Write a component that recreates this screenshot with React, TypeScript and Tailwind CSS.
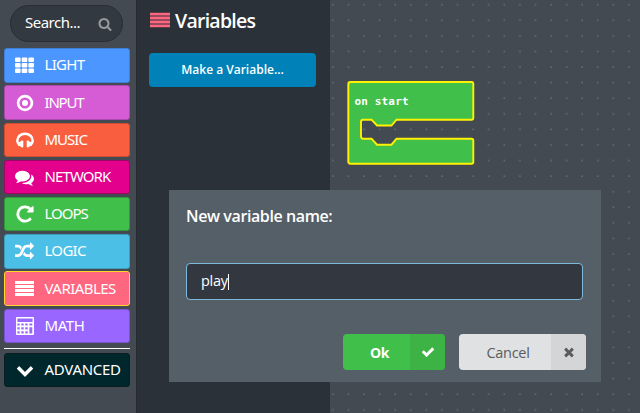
import React from "react";

type IconProps = { d: string; className?: string };

// Glyphs share a 1792-unit square.
function Glyph({ d, className = "" }: IconProps) {
  return (
    <svg viewBox="0 0 1792 1792" fill="currentColor" className={className} aria-hidden="true">
      <path d={d} />
    </svg>
  );
}

const SEARCH =
  "M1216 832q0-185-131.5-316.5t-316.5-131.5-316.5 131.5-131.5 316.5 131.5 316.5 316.5 131.5 316.5-131.5 131.5-316.5zm512 832q0 52-38 90t-90 38q-54 0-90-38l-343-342q-179 124-399 124-143 0-273.5-55.5t-225-150-150-225-55.5-273.5 55.5-273.5 150-225 225-150 273.5-55.5 273.5 55.5 225 150 150 225 55.5 273.5q0 220-124 399l343 343q37 37 37 90z";
const CHECK =
  "M1671 566q0 40-28 68l-724 724-136 136q-28 28-68 28t-68-28l-136-136-362-362q-28-28-28-68t28-68l136-136q28-28 68-28t68 28l294 295 656-657q28-28 68-28t68 28l136 136q28 28 28 68z";
const TIMES =
  "M1490 1322q0 40-28 68l-136 136q-28 28-68 28t-68-28l-294-294-294 294q-28 28-68 28t-68-28l-136-136q-28-28-28-68t28-68l294-294-294-294q-28-28-28-68t28-68l136-136q28-28 68-28t68 28l294 294 294-294q28-28 68-28t68 28l136 136q28 28 28 68t-28 68l-294 294 294 294q28 28 28 68z";
const CHEVRON =
  "M1683 808l-742 741q-19 19-45 19t-45-19l-742-741q-19-19-19-45.5t19-45.5l166-165q19-19 45-19t45 19l531 531 531-531q19-19 45-19t45 19l166 165q19 19 19 45.5t-19 45.5z";
const REPEAT =
  "M1664 256v448q0 26-19 45t-45 19h-448q-42 0-59-40-17-39 14-69l138-138q-148-137-349-137-104 0-198.5 40.5t-163.5 109.5-109.5 163.5-40.5 198.5 40.5 198.5 109.5 163.5 163.5 109.5 198.5 40.5q119 0 225-52t179-147q7-10 23-12 15 0 25 9l137 138q9 8 9.5 20.5t-7.5 22.5q-109 132-264 204.5t-327 72.5q-156 0-298-61t-245-164-164-245-61-298 61-298 164-245 245-164 298-61q147 0 284.5 55.5t244.5 156.5l130-129q29-31 70-14 39 17 39 59z";
const RANDOM =
  "M666 481q-60 92-137 273-22-45-37-72.5t-40.5-63.5-51-56.5-63-35-81.5-14.5h-224q-14 0-23-9t-9-23v-192q0-14 9-23t23-9h224q250 0 410 225zm1126 799q0 14-9 23l-320 320q-9 9-23 9-13 0-22.5-9.5t-9.5-22.5v-192q-32 0-85 .5t-81 1-73-1-71-5-64-10.5-63-18.5-58-28.5-59-40-55-53.5-56-69.5q59-93 136-273 22 45 37 72.5t40.5 63.5 51 56.5 63 35 81.5 14.5h256v-192q0-14 9-23t23-9q12 0 24 10l319 319q9 9 9 23zm0-896q0 14-9 23l-320 320q-9 9-23 9-13 0-22.5-9.5t-9.5-22.5v-192h-256q-48 0-87 15t-69 45-51 61.5-45 77.5q-32 62-78 171-29 66-49.5 111t-54 105-64 100-74 83-90 68.5-106.5 42-128 16.5h-224q-14 0-23-9t-9-23v-192q0-14 9-23t23-9h224q48 0 87-15t69-45 51-61.5 45-77.5q32-62 78-171 29-66 49.5-111t54-105 64-100 74-83 90-68.5 106.5-42 128-16.5h256v-192q0-14 9-23t23-9q12 0 24 10l319 319q9 9 9 23z";
const COMMENTS =
  "M1408 768q0 139-94 257t-256.5 186.5-353.5 68.5q-86 0-176-16-124 88-278 128-36 9-86 16h-3q-11 0-20.5-8t-11.5-21q-1-3-1-6.5t.5-6.5 2-6l2.5-5 3.5-5.5 4-5 4.5-5 4-4.5q5-6 23-25t26-29.5 22.5-29 25-38.5 20.5-44q-124-72-195-177t-71-224q0-139 94-257t256.5-186.5 353.5-68.5 353.5 68.5 256.5 186.5 94 257zm384 256q0 120-71 224.5t-195 176.5q10 24 20.5 44t25 38.5 22.5 29 26 29.5 23 25q1 1 4 4.5t4.5 5 4 5 3.5 5.5l2.5 5 2 6 .5 6.5-1 6.5q-3 14-13 22t-22 7q-50-7-86-16-154-40-278-128-90 16-176 16-271 0-472-132 58 4 88 4 161 0 309-45t264-129q125-92 192-212t67-254q0-77-23-152 129 71 204 178t75 230z";

const GridIcon = () => (
  <svg viewBox="0 0 19 16" fill="currentColor" className="h-4 w-[19px]">
    {[0.5, 6, 11.5].map((y) =>
      [0, 6.7, 13.4].map((x) => <rect key={`${x}-${y}`} x={x} y={y} width="5.6" height="4.4" rx="1" />)
    )}
  </svg>
);

const TargetIcon = () => (
  <svg viewBox="0 0 18 18" className="size-[18px]">
    <circle cx="9" cy="9" r="6.9" fill="none" stroke="currentColor" strokeWidth="2.7" />
    <circle cx="9" cy="9" r="3" fill="currentColor" />
  </svg>
);

const HeadphonesIcon = () => (
  <svg viewBox="0 0 18 16" className="h-4 w-[18px]">
    <path
      d="M3.2 12.7C1.9 11.6 1.3 10.3 1.3 8.8C1.3 4.8 4.6 1.7 9 1.7s7.7 3.1 7.7 7.1c0 1.5-.6 2.8-1.9 3.9"
      fill="none"
      stroke="currentColor"
      strokeWidth="2.5"
    />
    <rect x="5" y="8.4" width="2.3" height="7" rx="0.8" fill="currentColor" />
    <rect x="10.7" y="8.4" width="2.3" height="7" rx="0.8" fill="currentColor" />
    <path d="M5.2 9.2L2 10.6v2.9l3.2 1.3zM12.8 9.2L16 10.6v2.9l-3.2 1.3z" fill="currentColor" />
  </svg>
);

const LinesIcon = ({ className }: { className: string }) => (
  <svg viewBox="0 0 20 15" fill="currentColor" preserveAspectRatio="none" className={className}>
    {[0, 4, 8, 12].map((y) => (
      <rect key={y} x="0" y={y} width="20" height="3" rx="0.5" />
    ))}
  </svg>
);

const CalculatorIcon = () => (
  <svg viewBox="0 0 18 18" className="size-[18px]">
    <path
      fill="currentColor"
      fillRule="evenodd"
      d="M1 0h16q1 0 1 1v16q0 1-1 1H1q-1 0-1-1V1q0-1 1-1zM1.4 1.4v3.5h15.2V1.4zM1.4 6.5v2.1h2.3V6.5zM5.3 6.5v2.1h2.4V6.5zM9.3 6.5v2.1h2.4V6.5zM13.4 6.5v2.1h2.9V6.5zM1.4 10.3v2.3h2.3v-2.3zM5.3 10.3v2.3h2.4v-2.3zM9.3 10.3v2.3h2.4v-2.3zM13.4 10.3v6.1h2.9v-6.1zM1.4 14.2v2.2h2.3v-2.2zM5.3 14.2v2.2h2.4v-2.2zM9.3 14.2v2.2h2.4v-2.2z"
    />
  </svg>
);

const categories: { name: string; color: string; icon: React.ReactNode; tracking?: string }[] = [
  { name: "LIGHT", color: "bg-[#4c97ff] border-[#3f7fd8]", icon: <GridIcon />, tracking: "tracking-[-0.7px]" },
  { name: "INPUT", color: "bg-[#d65cd6] border-[#ab48ad]", icon: <TargetIcon />, tracking: "tracking-[-1.2px]" },
  { name: "MUSIC", color: "bg-[#f95f3f] border-[#cf4c33]", icon: <HeadphonesIcon />, tracking: "tracking-[-1px]" },
  { name: "NETWORK", color: "bg-[#e3008c] border-[#9d0864]", icon: <Glyph d={COMMENTS} className="size-[19px]" />, tracking: "tracking-[-0.9px]" },
  { name: "LOOPS", color: "bg-[#40bf4a] border-[#34963d]", icon: <Glyph d={REPEAT} className="size-5" />, tracking: "tracking-[-1px]" },
  { name: "LOGIC", color: "bg-[#4cbfe6] border-[#409bbd]", icon: <Glyph d={RANDOM} className="size-[19px]" />, tracking: "tracking-[-0.7px]" },
  { name: "VARIABLES", color: "bg-[#ff6680] border-[#ffd52e]", icon: <LinesIcon className="h-[15px] w-[19px]" />, tracking: "tracking-[-0.55px]" },
  { name: "MATH", color: "bg-[#9966ff] border-[#7b54cf]", icon: <CalculatorIcon />, tracking: "tracking-[-0.4px]" },
];

function Category({
  name,
  color,
  icon,
  tracking = "tracking-[-0.3px]",
}: {
  name: string;
  color: string;
  icon: React.ReactNode;
  tracking?: string;
}) {
  return (
    <button
      className={`flex h-[34.4px] w-[126px] items-center rounded-[3px] border text-[15px] leading-none text-white ${color}`}
    >
      <span className="ml-2.5 flex w-5 justify-center">{icon}</span>
      <span className={`ml-2.5 pb-px whitespace-nowrap ${tracking}`}>{name}</span>
    </button>
  );
}

const BLOCK =
  "M20.5 82H141.5Q143.3 82 143.3 84V118Q143.3 119.7 141.5 119.7H66.5L61.5 125.5H47L41.5 119.7H33Q31 119.7 31 122V136Q31 138.7 33 138.7H41.5L47 144.7H61.5L66.5 138.7H141.5Q143.3 138.7 143.3 140.5V162Q143.3 163.7 141.5 163.7H20.5Q18.3 163.7 18.3 161.5V84.5Q18.3 82 20.5 82Z";

export default function App() {
  return (
    <div className="relative flex h-[413px] w-[640px] overflow-hidden bg-[#434a52] font-['Noto_Sans','Open_Sans',sans-serif] text-white">
      <aside className="flex w-[137px] shrink-0 flex-col border-r border-[#252a30] pl-[3.5px]">
        <div className="mt-[5px] ml-[6.5px] flex h-[37px] w-[113px] shrink-0 items-center justify-between rounded-full border border-[#292e35] bg-[#333940] pr-2.5 pl-3.5">
          <span className="-mt-0.5 text-[15px] tracking-[-0.5px]">Search...</span>
          <Glyph d={SEARCH} className="size-3.5 text-[#989b9e]" />
        </div>
        <nav className="mt-[6.3px] flex flex-col gap-[2.8px]">
          {categories.map((c) => (
            <Category key={c.name} {...c} />
          ))}
        </nav>
        <div className="mt-[4.5px] h-px w-[126px] shrink-0 bg-white" />
        <div className="mt-[4px]">
          <Category
            name="ADVANCED"
            color="bg-[#00272b] border-[#0b1d20]"
            icon={<Glyph d={CHEVRON} className="size-[18px]" />}
          />
        </div>
      </aside>

      <section className="w-[193px] shrink-0 bg-[#2b3138] pl-[13px]">
        <h1 className="mt-[7px] flex h-7 items-center gap-[5px] text-[19.5px] font-semibold tracking-[-0.75px]">
          <LinesIcon className="h-[15px] w-5 -translate-y-[1.5px] text-[#ff6680]" />
          <span className="font-['Open_Sans']">Variables</span>
        </h1>
        <button className="mt-[18px] -ml-px flex h-[34px] w-[167px] items-center justify-center rounded-[4px] bg-[#0082b8] font-['Open_Sans'] text-[12px] font-semibold">
          Make a Variable...
        </button>
      </section>

      <main className="relative flex-1">
        <svg viewBox="0 0 310 413" className="absolute inset-0 h-[413px] w-[310px]">
          <defs>
            <pattern id="dots" x="-5" y="-3.2" width="15.58" height="15.58" patternUnits="userSpaceOnUse">
              <rect x="7.3" y="7.3" width="1.3" height="1.3" fill="#747b83" />
            </pattern>
          </defs>
          <rect width="310" height="413" fill="url(#dots)" />
          <path d={BLOCK} fill="#40bf4a" stroke="#fff200" strokeWidth="1.9" />
          <text
            x="24.5"
            y="105.4"
            fill="white"
            className="font-['DejaVu_Sans_Mono'] text-[11px] font-bold tracking-[0.15px]"
          >
            on start
          </text>
        </svg>
      </main>

      <div
        role="dialog"
        className="absolute top-[190px] left-[169px] flex h-[192px] w-[432px] flex-col bg-[#555f67] pl-[17px] font-['Open_Sans']"
      >
        <h2 className="mt-[15px] h-[22px] text-[16px] leading-[22px] font-semibold tracking-[-0.4px]">
          New variable name:
        </h2>
        <div className="mt-[36px] flex h-[37px] w-[397px] shrink-0 items-center rounded-[4px] border border-[#7eb9dc] bg-[#333840] pl-[14px] text-[14.5px]">
          <span className="-mt-0.5 tracking-[-0.3px]">play</span>
          <span className="h-4 w-px bg-white" />
        </div>
        <div className="mt-[34px] ml-[157px] flex gap-3.5 text-[14px]">
          <button className="flex h-9 w-[102px] overflow-hidden rounded-[4px] bg-[#40bf4a] font-bold">
            <span className="flex flex-1 items-center justify-center pl-1.5 tracking-[-0.5px]">Ok</span>
            <span className="flex w-[35px] items-center justify-center bg-[#3db346]">
              <Glyph d={CHECK} className="size-3.5" />
            </span>
          </button>
          <button className="flex h-9 w-[127px] overflow-hidden rounded-[4px] bg-[#e0e1e2] text-[#5b5c5d]">
            <span className="flex flex-1 items-center justify-center pt-px pl-1.5 text-[14.5px] tracking-[-0.3px]">
              Cancel
            </span>
            <span className="flex w-[35px] items-center justify-center bg-[#d4d5d6]">
              <Glyph d={TIMES} className="size-3.5" />
            </span>
          </button>
        </div>
      </div>
    </div>
  );
}
